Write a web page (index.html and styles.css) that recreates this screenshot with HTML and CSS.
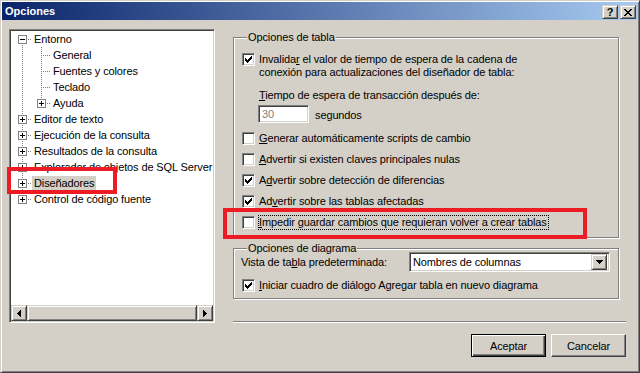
FILE: index.html
```html
<!DOCTYPE html>
<html lang="es">
<head>
<meta charset="utf-8">
<title>Opciones</title>
<link rel="stylesheet" href="styles.css">
</head>
<body>
<div class="window">
  <div class="titlebar">
    <span class="title">Opciones</span>
    <div class="caption-btns">
      <span class="cbtn help">?</span>
      <span class="cbtn close"><svg width="8" height="7" viewBox="0 0 8 7" shape-rendering="crispEdges"><path d="M0 0h2v1h-2zM6 0h2v1h-2zM1 1h2v1h-2zM5 1h2v1h-2zM2 2h4v1h-4zM3 3h2v1h-2zM2 4h4v1h-4zM1 5h2v1h-2zM5 5h2v1h-2zM0 6h2v1h-2zM6 6h2v1h-2z" fill="#000"/></svg></span>
    </div>
  </div>

  <div class="body">
    <div class="tree sunken">
      <div class="tree-view">
        <div class="tree-list">
          <div class="row l0"><span class="exp minus"></span><span class="dash"></span><span class="label">Entorno</span></div>
          <div class="children">
            <div class="row l1 leaf"><span class="dash long"></span><span class="label">General</span></div>
            <div class="row l1 leaf"><span class="dash long"></span><span class="label">Fuentes y colores</span></div>
            <div class="row l1 leaf"><span class="dash long"></span><span class="label">Teclado</span></div>
            <div class="row l1"><span class="exp plus"></span><span class="dash"></span><span class="label">Ayuda</span></div>
          </div>
          <div class="row l0"><span class="exp plus"></span><span class="dash"></span><span class="label">Editor de texto</span></div>
          <div class="row l0"><span class="exp plus"></span><span class="dash"></span><span class="label">Ejecución de la consulta</span></div>
          <div class="row l0"><span class="exp plus"></span><span class="dash"></span><span class="label">Resultados de la consulta</span></div>
          <div class="row l0"><span class="exp plus"></span><span class="dash"></span><span class="label">Explorador de objetos de SQL Server</span></div>
          <div class="row l0"><span class="exp plus"></span><span class="dash"></span><span class="label selected">Diseñadores</span></div>
          <div class="row l0"><span class="exp plus"></span><span class="dash"></span><span class="label">Control de código fuente</span></div>
        </div>
      </div>
      <div class="hscroll">
        <span class="sbtn"><svg width="4" height="7" viewBox="0 0 4 7" shape-rendering="crispEdges"><path d="M0 3h1v1h-1zM1 2h1v3h-1zM2 1h1v5h-1zM3 0h1v7h-1z" fill="#000"/></svg></span>
        <span class="thumb"></span>
        <span class="sbtn"><svg width="4" height="7" viewBox="0 0 4 7" shape-rendering="crispEdges"><path d="M3 3h1v1h-1zM2 2h1v3h-1zM1 1h1v5h-1zM0 0h1v7h-1z" fill="#000"/></svg></span>
      </div>
    </div>

    <div class="right">
      <div class="group g1">
        <span class="group-title">Opciones de tabla</span>
        <div class="check-row first">
          <span class="cb"><svg width="7" height="7" viewBox="0 0 7 7" shape-rendering="crispEdges"><path d="M0 2h1v3h-1zM1 3h1v3h-1zM2 4h1v3h-1zM3 3h1v3h-1zM4 2h1v3h-1zM5 1h1v3h-1zM6 0h1v3h-1z" fill="#000"/></svg></span>
          <span class="text">Invalida<u>r</u> el valor de tiempo de espera de la cadena de<br>conexión para actualizaciones del diseñador de tabla:</span>
        </div>
        <div class="sub">
          <div class="sub-label"><u>T</u>iempo de espera de transacción después de:</div>
          <div class="sub-input">
            <span class="field sunken">30</span>
            <span class="unit">segundos</span>
          </div>
        </div>
        <div class="check-row gen">
          <span class="cb"></span>
          <span class="text"><u>G</u>enerar automáticamente scripts de cambio</span>
        </div>
        <div class="check-row">
          <span class="cb"></span>
          <span class="text"><u>A</u>dvertir si existen claves principales nulas</span>
        </div>
        <div class="check-row">
          <span class="cb"><svg width="7" height="7" viewBox="0 0 7 7" shape-rendering="crispEdges"><path d="M0 2h1v3h-1zM1 3h1v3h-1zM2 4h1v3h-1zM3 3h1v3h-1zM4 2h1v3h-1zM5 1h1v3h-1zM6 0h1v3h-1z" fill="#000"/></svg></span>
          <span class="text">A<u>d</u>vertir sobre detección de diferencias</span>
        </div>
        <div class="check-row">
          <span class="cb"><svg width="7" height="7" viewBox="0 0 7 7" shape-rendering="crispEdges"><path d="M0 2h1v3h-1zM1 3h1v3h-1zM2 4h1v3h-1zM3 3h1v3h-1zM4 2h1v3h-1zM5 1h1v3h-1zM6 0h1v3h-1z" fill="#000"/></svg></span>
          <span class="text">Ad<u>v</u>ertir sobre las tablas afectadas</span>
        </div>
        <div class="check-row">
          <span class="cb"></span>
          <span class="text focus"><u>I</u>mpedir guardar cambios que requieran volver a crear tablas</span>
        </div>
      </div>

      <div class="group g2">
        <span class="group-title">Opciones de diagrama</span>
        <div class="combo-row">
          <span class="combo-label">Vista de ta<u>b</u>la predeterminada:</span>
          <div class="combo sunken">
            <span class="combo-text">Nombres de columnas</span>
            <span class="combo-btn"><svg width="7" height="4" viewBox="0 0 7 4" shape-rendering="crispEdges"><path d="M0 0h7v1h-7zM1 1h5v1h-5zM2 2h3v1h-3zM3 3h1v1h-1z" fill="#000"/></svg></span>
          </div>
        </div>
        <div class="check-row diag">
          <span class="cb"><svg width="7" height="7" viewBox="0 0 7 7" shape-rendering="crispEdges"><path d="M0 2h1v3h-1zM1 3h1v3h-1zM2 4h1v3h-1zM3 3h1v3h-1zM4 2h1v3h-1zM5 1h1v3h-1zM6 0h1v3h-1z" fill="#000"/></svg></span>
          <span class="text"><u>I</u>niciar cuadro de diálogo Agregar tabla en nuevo diagrama</span>
        </div>
      </div>

      <div class="separator"></div>

      <div class="buttons">
        <span class="btn default">Aceptar</span>
        <span class="btn">Cancelar</span>
      </div>
    </div>
  </div>

  <div class="mark mark-tree"></div>
  <div class="mark mark-opt"></div>
</div>
</body>
</html>
```

FILE: styles.css
```css
* { box-sizing: border-box; }

html, body {
  margin: 0;
  padding: 0;
  background: #d4d0c8;
}

body {
  font-family: "Liberation Sans", Arial, sans-serif;
  font-size: 11px;
  letter-spacing: -0.12px;
  color: #000;
}

u { text-decoration: underline; text-underline-offset: 1px; }

.window {
  position: relative;
  width: 640px;
  height: 373px;
  background: #d4d0c8;
  border: 1px solid;
  border-color: #d4d0c8 #404040 #404040 #d4d0c8;
  box-shadow: inset 1px 1px #fff, inset -1px -1px #808080;
  padding: 1px;
  overflow: hidden;
}

/* ---------- title bar ---------- */
.titlebar {
  height: 18px;
  display: flex;
  align-items: center;
  justify-content: space-between;
  background: linear-gradient(to right, #0a246a, #a6caf0);
  padding: 0 2px 0 3px;
}

.title {
  color: #fff;
  font-weight: bold;
  font-size: 11px;
  line-height: 13px;
  letter-spacing: 0;
}

.caption-btns {
  display: flex;
  gap: 2px;
  margin-top: 2px;
}

.cbtn {
  width: 16px;
  height: 14px;
  display: flex;
  align-items: center;
  justify-content: center;
  background: #d4d0c8;
  border: 1px solid;
  border-color: #d4d0c8 #404040 #404040 #d4d0c8;
  box-shadow: inset 1px 1px #fff, inset -1px -1px #808080;
}

.cbtn.help {
  font-weight: bold;
  font-size: 11px;
  line-height: 11px;
  padding-top: 1px;
}

/* ---------- body ---------- */
.body {
  display: flex;
  padding: 9px 0 0 7px;
}

.sunken {
  border: 1px solid;
  border-color: #808080 #fff #fff #808080;
  box-shadow: inset 1px 1px #404040, inset -1px -1px #d4d0c8;
  background: #fff;
}

/* ---------- tree ---------- */
.tree {
  width: 206px;
  height: 294px;
  padding: 1px;
  display: flex;
  flex-direction: column;
  flex-shrink: 0;
}

.tree-view {
  flex: 1;
}

.tree-list {
  background: repeating-linear-gradient(to bottom, #808080 0 1px, transparent 1px 2px) 11px 8px / 1px calc(100% - 16px) no-repeat;
}

.children {
  background: repeating-linear-gradient(to bottom, #808080 0 1px, transparent 1px 2px) 30px 0 / 1px calc(100% - 8px) no-repeat;
}

.row {
  height: 16px;
  display: flex;
  align-items: center;
  white-space: nowrap;
}

.row.l0 { padding-left: 7px; }
.row.l1 { padding-left: 26px; }
.row.l1.leaf { padding-left: 31px; }

.exp {
  width: 9px;
  height: 9px;
  flex-shrink: 0;
  border: 1px solid #808080;
  background: #fff;
}

.exp.minus {
  background: linear-gradient(#000, #000) 1px 3px / 5px 1px no-repeat, #fff;
}

.exp.plus {
  background:
    linear-gradient(#000, #000) 1px 3px / 5px 1px no-repeat,
    linear-gradient(#000, #000) 3px 1px / 1px 5px no-repeat,
    #fff;
}

.dash {
  width: 5px;
  height: 1px;
  flex-shrink: 0;
  background: repeating-linear-gradient(to right, transparent 0 1px, #808080 1px 2px);
}

.dash.long { width: 9px; }

.label {
  padding: 1px 2px;
  line-height: 13px;
}

.label.selected {
  background: #d4d0c8;
}

/* ---------- horizontal scrollbar ---------- */
.hscroll {
  height: 16px;
  display: flex;
  background: #d4d0c8;
}

.sbtn {
  width: 16px;
  height: 16px;
  display: flex;
  align-items: center;
  justify-content: center;
  border: 1px solid;
  border-color: #d4d0c8 #404040 #404040 #d4d0c8;
  box-shadow: inset 1px 1px #fff, inset -1px -1px #808080;
  flex-shrink: 0;
}

.thumb {
  flex: 1;
  border: 1px solid;
  border-color: #d4d0c8 #404040 #404040 #d4d0c8;
  box-shadow: inset 1px 1px #fff, inset -1px -1px #808080;
}

/* ---------- right column ---------- */
.right {
  width: 393px;
  margin-left: 18px;
  display: flex;
  flex-direction: column;
}

.group {
  width: 386px;
  border: 1px solid #808080;
  box-shadow: inset 1px 1px #fff, 1px 1px #fff;
  padding: 0 8px 8px 8px;
  display: flex;
  flex-direction: column;
}

.g1 { margin-top: 8px; }
.g2 { margin-top: 10px; padding-bottom: 6px; }

.group-title {
  align-self: flex-start;
  margin: -7px 0 0 5px;
  padding: 0 1px;
  line-height: 13px;
  height: 13px;
  background: #d4d0c8;
  white-space: nowrap;
}

.check-row {
  display: flex;
  align-items: center;
  gap: 4px;
  margin-top: 8px;
  line-height: 13px;
  white-space: nowrap;
}

.check-row.first {
  margin-top: 9px;
  align-items: flex-start;
}

.check-row.gen { margin-top: 9px; }
.check-row.diag { margin-top: 7px; }

.cb {
  width: 13px;
  height: 13px;
  flex-shrink: 0;
  display: flex;
  padding: 2px;
  border: 1px solid;
  border-color: #808080 #fff #fff #808080;
  box-shadow: inset 1px 1px #404040, inset -1px -1px #d4d0c8;
  background: #fff;
}

.text { line-height: 13px; }

.text.focus {
  border: 1px dotted #000;
  margin: -1px 0 -1px -1px;
  padding-right: 1px;
}

.sub {
  padding-left: 17px;
  margin-top: 10px;
}

.sub-label { line-height: 13px; }

.sub-input {
  display: flex;
  align-items: center;
  gap: 6px;
  margin-top: 3px;
  margin-left: -1px;
}

.field {
  width: 51px;
  height: 18px;
  padding: 0 3px;
  line-height: 16px;
  color: #808080;
}

.unit { padding-top: 2px; }

.combo-row {
  display: flex;
  align-items: center;
  justify-content: space-between;
  margin-top: -3px;
}

.combo-label { margin-left: -1px; }

.combo {
  width: 201px;
  height: 20px;
  display: flex;
  align-items: center;
  padding: 2px;
}

.combo-text {
  flex: 1;
  padding-left: 1px;
  line-height: 13px;
}

.combo-btn {
  width: 16px;
  height: 16px;
  display: flex;
  align-items: center;
  justify-content: center;
  background: #d4d0c8;
  border: 1px solid;
  border-color: #d4d0c8 #404040 #404040 #d4d0c8;
  box-shadow: inset 1px 1px #fff, inset -1px -1px #808080;
}

.separator {
  margin-top: 22px;
  height: 2px;
  border-top: 1px solid #808080;
  border-bottom: 1px solid #fff;
}

.buttons {
  display: flex;
  justify-content: flex-end;
  gap: 5px;
  margin-top: 11px;
}

.btn {
  width: 75px;
  height: 23px;
  display: flex;
  align-items: center;
  justify-content: center;
  background: #d4d0c8;
  border: 1px solid;
  border-color: #fff #404040 #404040 #fff;
  box-shadow: inset -1px -1px #808080;
}

.btn.default {
  border: 1px solid #000;
  box-shadow: inset 1px 1px #fff, inset -1px -1px #404040, inset -2px -2px #808080;
}

/* ---------- annotation marks ---------- */
.mark {
  position: absolute;
  border: 4px solid #ed1c24;
  pointer-events: none;
}

.mark-tree {
  left: 6px;
  top: 166px;
  width: 110px;
  height: 27px;
}

.mark-opt {
  left: 222px;
  top: 207px;
  width: 364px;
  height: 31px;
}
```
